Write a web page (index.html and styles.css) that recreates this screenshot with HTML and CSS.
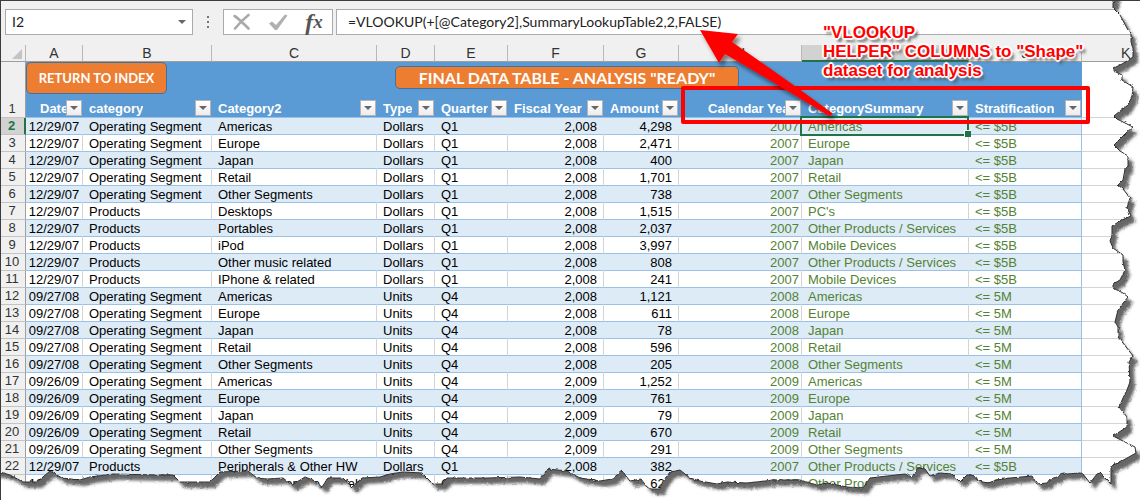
FILE: index.html
```html
<!DOCTYPE html>
<html lang="en">
<head>
<meta charset="utf-8">
<title>Final data table</title>
<link rel="stylesheet" href="styles.css">
</head>
<body>
<main class="page">
<div class="bar">
  <div class="namebox">
    <input class="name-input" type="text" aria-label="Name box" value="I2">
    <button class="plain" type="button" aria-label="Choose name"><span class="tri"></span></button>
  </div>
  <svg class="dots" width="4" height="14" viewBox="0 0 4 14"><path fill="#777" d="M1 1h2v2H1zM1 6h2v2H1zM1 11h2v2H1z"/></svg>
  <div class="tools">
    <button class="plain" type="button" aria-label="Cancel"><svg width="20" height="20" viewBox="0 0 20 20"><path d="M2.500 4Q6 6 16.500 16.500M16.500 3Q9 9 3 16.500" fill="none" stroke="#aaa" stroke-width="2.600" stroke-linecap="round"/></svg></button>
    <button class="plain" type="button" aria-label="Enter"><svg width="20" height="20" viewBox="0 0 20 20"><path d="M1 11.500l3-2 4 3.500L17 2.500l2.500 1L9 18H7z" fill="#b0b0b0"/></svg></button>
    <button class="plain fx" type="button" aria-label="Insert function"><i>f</i><i class="fx-x">x</i></button>
  </div>
  <input class="formula" type="text" aria-label="Formula" value="=VLOOKUP(+[@Category2],SummaryLookupTable2,2,FALSE)">
</div>

<div class="sheet">
<table class="grid">
<colgroup><col class="w-n"><col class="w-a"><col class="w-b"><col class="w-c"><col class="w-d"><col class="w-e"><col class="w-f"><col class="w-g"><col class="w-h"><col class="w-i"><col class="w-j"><col></colgroup>
<thead>
<tr class="letters"><th><svg class="corner" width="10" height="10" viewBox="0 0 10 10"><path d="M10 0v10H0z" fill="#c4c4c4"/></svg></th><th>A</th><th>B</th><th>C</th><th>D</th><th>E</th><th>F</th><th>G</th><th>H</th><th class="on">I</th><th>J</th><th class="k">K</th></tr>
<tr class="heads"><th class="num">1</th>
<th class="date"><div class="head"><span>Date</span><button type="button" aria-label="Filter Date"><span class="tri"></span></button></div></th>
<th><div class="head"><span>category</span><button type="button" aria-label="Filter category"><span class="tri"></span></button></div></th>
<th><div class="head"><span>Category2</span><button type="button" aria-label="Filter Category2"><span class="tri"></span></button></div></th>
<th><div class="head"><span>Type</span><button type="button" aria-label="Filter Type"><span class="tri"></span></button></div></th>
<th><div class="head"><span>Quarter</span><button type="button" aria-label="Filter Quarter"><span class="tri"></span></button></div></th>
<th><div class="head"><span>Fiscal Year</span><button type="button" aria-label="Filter Fiscal Year"><span class="tri"></span></button></div></th>
<th><div class="head"><span>Amount</span><button type="button" aria-label="Filter Amount"><span class="tri"></span></button></div></th>
<th class="cal"><div class="head"><span>Calendar Year</span><button type="button" aria-label="Filter Calendar Year"><span class="tri"></span></button></div></th>
<th><div class="head"><span>CategorySummary</span><button type="button" aria-label="Filter CategorySummary"><span class="tri"></span></button></div></th>
<th><div class="head"><span>Stratification</span><button type="button" aria-label="Filter Stratification"><span class="tri"></span></button></div></th>
<th class="k"></th></tr>
</thead>
<tbody>
<tr class="current"><th>2</th><td>12/29/07</td><td>Operating Segment</td><td>Americas</td><td>Dollars</td><td>Q1</td><td>2,008</td><td>4,298</td><td>2007</td><td class="cell-on">Americas</td><td>&lt;= $5B</td><td></td></tr>
<tr><th>3</th><td>12/29/07</td><td>Operating Segment</td><td>Europe</td><td>Dollars</td><td>Q1</td><td>2,008</td><td>2,471</td><td>2007</td><td>Europe</td><td>&lt;= $5B</td><td></td></tr>
<tr><th>4</th><td>12/29/07</td><td>Operating Segment</td><td>Japan</td><td>Dollars</td><td>Q1</td><td>2,008</td><td>400</td><td>2007</td><td>Japan</td><td>&lt;= $5B</td><td></td></tr>
<tr><th>5</th><td>12/29/07</td><td>Operating Segment</td><td>Retail</td><td>Dollars</td><td>Q1</td><td>2,008</td><td>1,701</td><td>2007</td><td>Retail</td><td>&lt;= $5B</td><td></td></tr>
<tr><th>6</th><td>12/29/07</td><td>Operating Segment</td><td>Other Segments</td><td>Dollars</td><td>Q1</td><td>2,008</td><td>738</td><td>2007</td><td>Other Segments</td><td>&lt;= $5B</td><td></td></tr>
<tr><th>7</th><td>12/29/07</td><td>Products</td><td>Desktops</td><td>Dollars</td><td>Q1</td><td>2,008</td><td>1,515</td><td>2007</td><td>PC's</td><td>&lt;= $5B</td><td></td></tr>
<tr><th>8</th><td>12/29/07</td><td>Products</td><td>Portables</td><td>Dollars</td><td>Q1</td><td>2,008</td><td>2,037</td><td>2007</td><td>Other Products / Services</td><td>&lt;= $5B</td><td></td></tr>
<tr><th>9</th><td>12/29/07</td><td>Products</td><td>iPod</td><td>Dollars</td><td>Q1</td><td>2,008</td><td>3,997</td><td>2007</td><td>Mobile Devices</td><td>&lt;= $5B</td><td></td></tr>
<tr><th>10</th><td>12/29/07</td><td>Products</td><td>Other music related</td><td>Dollars</td><td>Q1</td><td>2,008</td><td>808</td><td>2007</td><td>Other Products / Services</td><td>&lt;= $5B</td><td></td></tr>
<tr><th>11</th><td>12/29/07</td><td>Products</td><td>IPhone &amp; related</td><td>Dollars</td><td>Q1</td><td>2,008</td><td>241</td><td>2007</td><td>Mobile Devices</td><td>&lt;= $5B</td><td></td></tr>
<tr><th>12</th><td>09/27/08</td><td>Operating Segment</td><td>Americas</td><td>Units</td><td>Q4</td><td>2,008</td><td>1,121</td><td>2008</td><td>Americas</td><td>&lt;= 5M</td><td></td></tr>
<tr><th>13</th><td>09/27/08</td><td>Operating Segment</td><td>Europe</td><td>Units</td><td>Q4</td><td>2,008</td><td>611</td><td>2008</td><td>Europe</td><td>&lt;= 5M</td><td></td></tr>
<tr><th>14</th><td>09/27/08</td><td>Operating Segment</td><td>Japan</td><td>Units</td><td>Q4</td><td>2,008</td><td>78</td><td>2008</td><td>Japan</td><td>&lt;= 5M</td><td></td></tr>
<tr><th>15</th><td>09/27/08</td><td>Operating Segment</td><td>Retail</td><td>Units</td><td>Q4</td><td>2,008</td><td>596</td><td>2008</td><td>Retail</td><td>&lt;= 5M</td><td></td></tr>
<tr><th>16</th><td>09/27/08</td><td>Operating Segment</td><td>Other Segments</td><td>Units</td><td>Q4</td><td>2,008</td><td>205</td><td>2008</td><td>Other Segments</td><td>&lt;= 5M</td><td></td></tr>
<tr><th>17</th><td>09/26/09</td><td>Operating Segment</td><td>Americas</td><td>Units</td><td>Q4</td><td>2,009</td><td>1,252</td><td>2009</td><td>Americas</td><td>&lt;= 5M</td><td></td></tr>
<tr><th>18</th><td>09/26/09</td><td>Operating Segment</td><td>Europe</td><td>Units</td><td>Q4</td><td>2,009</td><td>761</td><td>2009</td><td>Europe</td><td>&lt;= 5M</td><td></td></tr>
<tr><th>19</th><td>09/26/09</td><td>Operating Segment</td><td>Japan</td><td>Units</td><td>Q4</td><td>2,009</td><td>79</td><td>2009</td><td>Japan</td><td>&lt;= 5M</td><td></td></tr>
<tr><th>20</th><td>09/26/09</td><td>Operating Segment</td><td>Retail</td><td>Units</td><td>Q4</td><td>2,009</td><td>670</td><td>2009</td><td>Retail</td><td>&lt;= 5M</td><td></td></tr>
<tr><th>21</th><td>09/26/09</td><td>Operating Segment</td><td>Other Segments</td><td>Units</td><td>Q4</td><td>2,009</td><td>291</td><td>2009</td><td>Other Segments</td><td>&lt;= 5M</td><td></td></tr>
<tr><th>22</th><td>12/29/07</td><td>Products</td><td>Peripherals &amp; Other HW</td><td>Dollars</td><td>Q1</td><td>2,008</td><td>382</td><td>2007</td><td>Other Products / Services</td><td>&lt;= $5B</td><td></td></tr>
<tr><th></th><td>12/29/07</td><td></td><td>Software, Service &amp; Web</td><td></td><td>Q1</td><td>2,008</td><td>627</td><td>2007</td><td>Other Products / Services</td><td>&lt;= $5B</td><td></td></tr>
</tbody>
</table>
<button class="shape index" type="button">RETURN TO INDEX</button>
<div class="shape title">FINAL DATA TABLE - ANALYSIS "READY"</div>
</div>

<div class="redbox"></div>
<svg class="layer" width="1140" height="500" viewBox="0 0 1140 500" aria-hidden="true">
  <defs>
    <filter id="drop" x="-20%" y="-20%" width="150%" height="150%"><feDropShadow dx="3" dy="4" stdDeviation="2" flood-color="#000" flood-opacity=".5"/></filter>
    <filter id="soft" filterUnits="userSpaceOnUse" x="-60" y="-60" width="1260" height="620"><feGaussianBlur stdDeviation="1.500"/></filter>
    <filter id="rough" filterUnits="userSpaceOnUse" x="-40" y="-40" width="1220" height="580" color-interpolation-filters="sRGB"><feTurbulence type="fractalNoise" baseFrequency=".3" numOctaves="1" seed="4" result="n"/><feDisplacementMap in="SourceGraphic" in2="n" scale="3" xChannelSelector="R" yChannelSelector="G"/></filter>
    <path id="paper" d="M-50-50L1115-50 1115 0 1113 3 1113 8 1120 15 1128 30 1131 33 1131 43 1133 48 1133 57 1127 61 1122 64 1114 68 1114 71 1122 75 1122 80 1133 87 1132 97 1127 106 1120 111 1114 116 1117 119 1123 122 1133 127 1127 132 1117 142 1114 145 1120 151 1128 156 1128 167 1125 169 1123 180 1118 185 1123 189 1130 198 1127 208 1131 216 1122 220 1112 226 1112 235 1110 241 1113 248 1123 255 1123 262 1125 270 1120 280 1113 284 1113 288 1123 293 1128 297 1120 307 1118 310 1115 322 1118 327 1118 337 1123 343 1133 356 1129 362 1130 382 1127 390 1123 398 1119 407 1127 417 1127 427 1113 436 1135 447 1136 453 1120 462 1111 466 1111 484 1100 473 1097 474 1090 483 1083 474 1080 473 1067 474 1063 473 1057 477 1050 479 1047 483 1037 484 1032 476 1010 478 997 480 988 483 978 481 973 475 967 475 960 482 952 474 940 473 930 476 925 469 918 468 912 477 905 474 887 476 870 478 863 488 847 487 827 483 817 485 800 480 773 480 747 483 727 482 717 484 700 481 690 478 680 470 670 472 662 483 660 489 652 489 647 487 641 479 630 481 622 471 612 479 600 481 587 479 580 478 567 471 548 469 540 479 520 477 487 478 460 478 447 478 442 484 433 484 422 473 403 472 390 474 380 477 362 478 352 487 343 478 328 478 322 487 313 480 305 477 292 485 283 478 267 479 257 478 248 471 220 472 210 482 180 482 173 475 157 475 113 474 90 477 80 480 62 478 50 471 37 482 23 482 10 475 0 472-50 472Z"/>
    <mask id="outside" maskUnits="userSpaceOnUse" x="-60" y="-60" width="1260" height="620"><path fill="#fff" d="M-60-60H1200V560H-60z"/><use href="#paper" fill="#000"/></mask>
  </defs>
  <g filter="url(#rough)">
    <g mask="url(#outside)">
      <path fill="#fff" d="M-60-60H1200V560H-60z"/>
      <g filter="url(#soft)"><use href="#paper" fill="#666" transform="translate(5 6)"/></g>
    </g>
    <use href="#paper" fill="none" stroke="#303030" stroke-width="1"/>
  </g>
  <path filter="url(#drop)" fill="#f00" d="M700 30L738 34 732 42Q780 75 832 113 832 116 829 116 780 86 725 54L719 63z"/>
</svg>
<p class="callout">"VLOOKUP<br>HELPER" COLUMNS to "Shape"<br>dataset for analysis</p>
</main>
</body>
</html>
```
FILE: styles.css
```css
* { box-sizing: border-box; }
body { margin: 0; background: #fff; font-family: "Liberation Sans", Arial, sans-serif; font-size: 13px; color: #000; }
.page { position: relative; height: 100vh; overflow: hidden; border-top: 1px solid #3c3c3c; border-left: 1px solid #3c3c3c; }
button, input { font: inherit; color: inherit; border: 0; padding: 0; margin: 0; }
.bar { display: flex; align-items: center; height: 44px; padding: 0 0 3px 4px; background: #f0f0f0; }
.namebox, .tools, .formula { height: 26px; background: #fff; border: 1px solid #ababab; }
.namebox { display: flex; width: 188px; }
.name-input, .formula { font-family: Lato, sans-serif; font-size: 14px; color: #222; }
.name-input { flex: 1; min-width: 0; padding-left: 6px; background: none; }
.plain { display: flex; align-items: center; justify-content: center; width: 20px; background: none; }
.tri { border: 4px solid transparent; border-top: 4px solid #666; border-bottom: 0; }
.dots { margin: 0 13px; }
.tools { display: flex; justify-content: space-between; width: 110px; padding: 0 8px; margin-right: 3px; }
.fx { font-family: "Liberation Serif", serif; font-size: 24px; font-weight: bold; color: #555; line-height: 24px; }
.fx-x { font-size: 19px; }
.formula { flex: 1; min-width: 0; padding: 0 11px; }
.sheet { position: relative; }
.grid { width: 100%; table-layout: fixed; border-collapse: separate; border-spacing: 0; }
.w-n { width: 25px; } .w-a { width: 57px; } .w-b { width: 129px; } .w-c { width: 165px; }
.w-d { width: 58px; } .w-e { width: 73px; } .w-f { width: 96px; } .w-g { width: 75px; }
.w-h { width: 123px; } .w-i { width: 167px; } .w-j { width: 113px; }
th, td { height: 17px; padding: 0 6px; line-height: 16px; white-space: nowrap; overflow: hidden; text-align: left; }
.letters th { padding: 0; text-align: center; font-size: 14px; font-weight: normal; line-height: 15px; color: #333; background: #f0f0f0; border-right: 1px solid #b8b8b8; border-bottom: 1px solid #9e9e9e; }
.letters .on { background: #d2d2d2; border-bottom: 2px solid #217346; }
.letters th.k { padding-left: 39px; text-align: left; border-right: 0; }
.letters .corner { display: block; margin: 1px 3px 0 auto; }
.heads th { height: 56px; padding: 0; vertical-align: bottom; background: #5b9bd5; color: #fff; border-bottom: 1px solid #9bc2e6; }
.heads .k { background: #fff; border-bottom-color: #d4d4d4; }
.head { display: flex; justify-content: space-between; align-items: flex-end; height: 17px; padding: 0 1px 1px 6px; }
.head > span { min-width: 0; overflow: hidden; line-height: 15px; }
.head button { display: flex; flex: none; align-items: center; justify-content: center; width: 16px; height: 16px; background: linear-gradient(#fff, #ececf0); border: 1px solid #b4b4b4; }
.date .head { padding-left: 14px; }
.cal .head { padding-left: 29px; }
tbody td { padding-top: 1px; line-height: 15px; border-bottom: 1px solid #9bc2e6; border-right: 1px solid #d4d4d4; }
tbody tr:nth-child(odd) td { background: #ddebf7; border-right-color: #ddebf7; }
tbody th, .heads .num { padding: 0 2px 0 0; text-align: center; font-weight: normal; color: #333; background: #f0f0f0; border-right: 1px solid #9e9e9e; border-bottom: 1px solid #c4c4c4; }
.current th { color: #217346; font-weight: bold; background: #d2d2d2; border-right: 2px solid #217346; }
td:nth-child(2) { padding-left: 0; padding-right: 0; text-align: center; }
td:nth-child(7), td:nth-child(8) { text-align: right; }
td:nth-child(9) { padding-right: 2px; text-align: right; }
td:nth-child(n+9) { color: #548235; }
tbody tr td:nth-child(11), tbody tr:nth-child(odd) td:nth-child(11) { border-right-color: #9bc2e6; }
tbody tr td:last-child, tbody tr:nth-child(odd) td:last-child { background: #fff; border-right: 0; border-bottom-color: #d4d4d4; }
.cell-on { position: relative; overflow: visible; }
.cell-on::before { content: ""; position: absolute; inset: -2px -1px -2px -2px; border: 2px solid #217346; }
.cell-on::after { content: ""; position: absolute; right: -3px; bottom: -3px; width: 6px; height: 6px; background: #217346; border: solid #fff; border-width: 1px 0 0 1px; }
.shape { position: absolute; display: flex; align-items: center; justify-content: center; background: #ed7d31; border: 1px solid #41719c; border-radius: 5px; color: #fff; font-family: Lato, sans-serif; font-weight: bold; white-space: nowrap; }
.index { top: 17px; left: 25px; width: 141px; height: 32px; font-size: 13px; }
.title { top: 21px; left: 394px; width: 344px; height: 23px; font-size: 16px; }
.redbox { position: absolute; left: 680px; top: 85px; width: 409px; height: 38px; border: 4px solid #f00; border-radius: 2px; }
.layer { position: absolute; left: -1px; top: -1px; pointer-events: none; }
.callout { position: absolute; left: 822px; top: 22px; margin: 0; font-size: 17px; font-weight: bold; line-height: 19px; color: #f00; white-space: nowrap; text-shadow: 0 0 2px #fff, 1px 1px 1px #fff, -1px -1px 1px #fff, 1px -1px 1px #fff, -1px 1px 1px #fff, 2px 0 1px #fff, -2px 0 1px #fff, 0 2px 1px #fff, 0 -2px 1px #fff, 3px 4px 3px #555; }
```
